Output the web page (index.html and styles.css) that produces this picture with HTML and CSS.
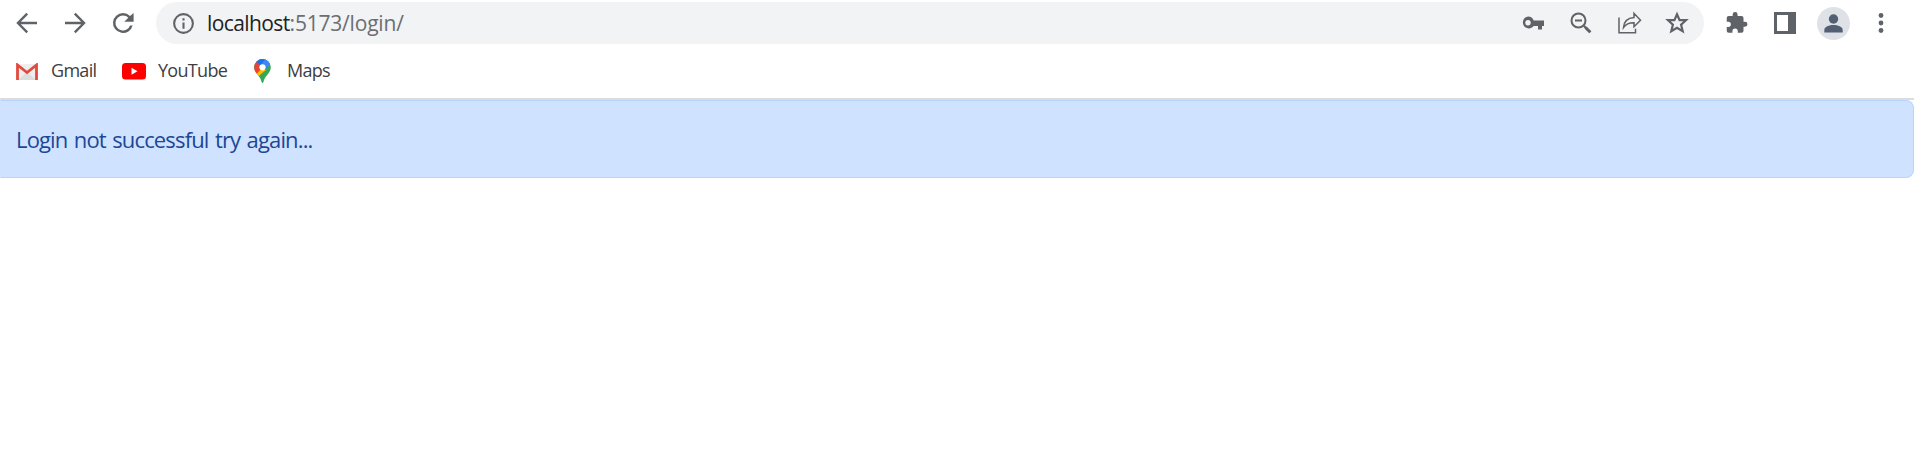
FILE: index.html
```html
<!DOCTYPE html>
<html lang="en">
<head>
<meta charset="utf-8">
<title>localhost:5173/login/</title>
<link rel="stylesheet" href="styles.css">
</head>
<body>
<header class="browser">
  <div class="toolbar">
    <svg class="icon" viewBox="0 0 30 30"><path class="line" d="M25 15H6.500M15.200 5.700 6 15l9.200 9.300"/></svg>
    <svg class="icon" viewBox="0 0 30 30"><path class="line" d="M5 15h18.500M14.800 5.700 24 15l-9.200 9.300"/></svg>
    <svg class="icon" viewBox="0 0 24 24"><path d="M17.650 6.350A7.958 7.958 0 0 0 12 4a8 8 0 1 0 7.730 10h-2.080A6 6 0 1 1 12 6c1.660 0 3.140.69 4.220 1.780L13 11h7.500V4z"/></svg>
    <div class="address">
      <svg class="icon info" viewBox="0 0 24 24"><path d="M11 7h2v2h-2zm0 4h2v6h-2zm1-9a10 10 0 1 0 0 20 10 10 0 0 0 0-20zm0 18a8 8 0 1 1 0-16 8 8 0 0 1 0 16z"/></svg>
      <div class="url"><span class="host">localhost</span>:5173/login/</div>
      <svg class="icon" viewBox="0 0 30 30"><path fill-rule="evenodd" d="M10 8.500a6 6 0 0 1 5.700 4H26V18h-2v3.500h-4V18h-4.300A6 6 0 1 1 10 8.500zm0 3.500a2.700 2.700 0 1 0 0 5.400 2.700 2.700 0 0 0 0-5.400z"/></svg>
      <svg class="icon" viewBox="0 0 30 30"><circle class="thin" cx="12.500" cy="12.500" r="7"/><path class="thin" d="M9 12.500h7M17.800 17.800l6.500 6.500"/><path class="thick" d="m19.500 19.500 4.800 4.800"/></svg>
      <svg class="icon share" viewBox="0 0 30 30"><path class="fine" d="M4 9.500v15.300h16.500v-4M8.500 19.500c.5-6.500 4.200-9.500 10.500-10V5.300l6.500 7-6.500 6.500v-4c-5-.1-8 1.200-10.500 4.700z"/></svg>
      <svg class="icon" viewBox="0 0 30 30"><path class="star" d="m15 6.200 2.600 6h6.400l-4.900 4.500 1.600 6.500-5.700-3.500-5.700 3.500 1.600-6.500L6 12.200h6.400z"/></svg>
    </div>
    <svg class="icon" viewBox="0 0 24 24"><path d="M20.500 11H19V7a2 2 0 0 0-2-2h-4V3.500a2.500 2.500 0 0 0-5 0V5H4a2 2 0 0 0-2 2v3.800h1.500a2.700 2.700 0 0 1 0 5.400H2V20a2 2 0 0 0 2 2h3.800v-1.500a2.700 2.700 0 0 1 5.400 0V22H17a2 2 0 0 0 2-2v-4h1.500a2.500 2.500 0 0 0 0-5z" transform="translate(2.200 2.400) scale(.79)"/></svg>
    <svg class="icon panel" viewBox="0 0 30 30"><path fill-rule="evenodd" d="M4 4h22v22H4zm3 3v16h11V7z"/></svg>
    <svg class="avatar" viewBox="0 0 33 33"><circle class="halo" cx="16.500" cy="16.500" r="16.500"/><circle class="person" cx="16.500" cy="12" r="4.700"/><path class="person" d="M7.300 25.500V23c0-3.300 5-5 9.200-5s9.200 1.700 9.200 5v2.500z"/></svg>
    <svg class="icon" viewBox="0 0 30 30"><circle cx="15" cy="7.500" r="2.400"/><circle cx="15" cy="15" r="2.400"/><circle cx="15" cy="22.500" r="2.400"/></svg>
  </div>
  <nav class="bookmarks">
    <a class="bookmark gmail"><svg viewBox="0 0 22 17"><path fill="#eee" d="M1 1h20v16H1z"/><path fill="#ddd" d="m2 17 9-8 9 8z"/><path fill="none" stroke="#e04a3f" stroke-width="2.800" d="M1.500 17V2l9.500 7.500L20.500 2v15"/></svg><span>Gmail</span></a>
    <a class="bookmark youtube"><svg viewBox="0 0 24 17"><rect width="24" height="16.500" rx="3.500" fill="#f00"/><path fill="#fff" d="M9.500 4.700v7l6-3.500z"/></svg><span>YouTube</span></a>
    <a class="bookmark maps"><svg viewBox="0 0 17 24"><defs><clipPath id="pin"><path d="M8.500 0A8.300 8.300 0 0 0 .2 8.300c0 3 1.300 4.800 3 6.900 2.600 3.200 3.500 4.500 4.400 7.700.4 1.300 1.400 1.300 1.800 0 .9-3.200 1.800-4.500 4.400-7.700 1.700-2.100 3-3.900 3-6.900A8.300 8.300 0 0 0 8.500 0z"/></clipPath></defs><g clip-path="url(#pin)"><path fill="#34a853" d="M0 0h17v24H0z"/><path fill="#fbbc04" d="M0 14 8 5l4 6-8.500 7z"/><path fill="#ea4335" d="M0 0h3l6 8-6.500 7L0 14z"/><path fill="#1a73e8" d="M2 3 5 0h6L8 8z"/><path fill="#4285f4" d="M11 0h6v4.500L11 11 6 8z"/></g><circle cx="8.500" cy="8.300" r="3.100" fill="#fff"/></svg><span>Maps</span></a>
  </nav>
</header>
<main><div class="alert" role="alert">Login not successful try again...</div></main>
</body>
</html>
```
FILE: styles.css
```css
* { box-sizing: border-box; }
body { margin: 0; background: #fff; font-family: "Open Sans", "Noto Sans", sans-serif; }
.browser { height: 100px; border-bottom: 2px solid #dcdcdc; }
.toolbar { display: flex; align-items: center; gap: 18px; height: 46px; padding: 0 18px 0 12px; }
.icon { flex: none; width: 30px; height: 30px; fill: #5f6368; }
.line, .thin, .thick, .fine, .star { fill: none; stroke: #5f6368; }
.line { stroke-width: 2.400; }
.thin { stroke-width: 2; }
.thick { stroke-width: 3; }
.fine { stroke-width: 1.500; }
.star { stroke-width: 2.200; }
.address { display: flex; align-items: center; gap: 18px; flex: 1; height: 42px; padding: 0 12px 0 15px; border-radius: 21px; background: #f1f3f4; }
.address .info { width: 25px; height: 25px; }
.address .share { margin: 0 -1px 0 1px; }
.panel { margin-right: -1px; }
.url { flex: 1; margin-left: -7px; color: #6b6e72; font-size: 21px; line-height: 30px; letter-spacing: -.2px; }
.host { color: #202124; letter-spacing: -.6px; }
.avatar { flex: none; width: 33px; height: 33px; margin-right: -2px; }
.halo { fill: #dee1e6; }
.person { fill: #535f73; }
.bookmarks { display: flex; align-items: center; height: 50px; padding-left: 16px; }
.bookmark { display: flex; align-items: center; color: #3c4043; font-size: 18px; line-height: 24px; letter-spacing: -.7px; }
.bookmark span { margin-bottom: 2px; }
.gmail { width: 106px; gap: 13px; }
.gmail svg { width: 22px; height: 17px; }
.youtube { width: 132px; gap: 12px; }
.youtube svg { width: 24px; height: 17px; }
.maps { gap: 16px; }
.maps svg { width: 17px; height: 24px; }
.alert { height: 78px; padding: 22px 15px; border: 1px solid #b6d4fe; border-left-color: #cfe2ff; border-radius: 0 8px 8px 0; background: #cfe2ff; color: #1c4796; font-size: 22px; line-height: 32px; letter-spacing: -.85px; word-spacing: 1.5px; }
```
